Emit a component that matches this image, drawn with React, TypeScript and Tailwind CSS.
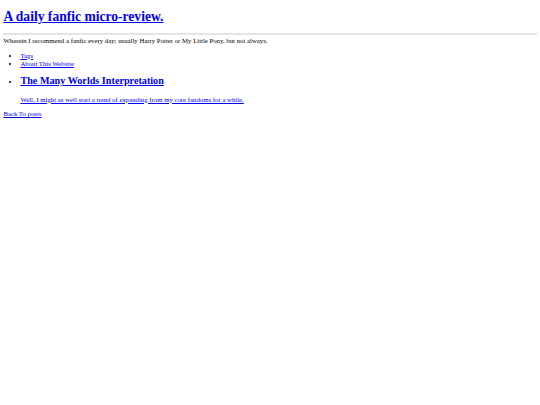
export default function App() {
  return (
    <div className="min-h-[405px] bg-white px-[3.4px] pt-px font-['Liberation_Serif',serif] text-[6.78px] leading-[7.8px] text-black">
      <h1 className="mt-[7.6px] text-[13.57px] leading-[15.6px] font-bold">
        <a href="#" className="text-[#0000ee] underline">
          A daily fanfic micro-review.
        </a>
      </h1>
      <hr className="mt-[8.6px] border-t-2 border-[#e4e4e4]" />
      <p className="mt-[1.8px]">
        Wherein I recommend a fanfic every day; usually Harry Potter or My Little Pony, but not always.
      </p>
      <ul className="mt-[7.4px] list-disc pl-[17px]">
        <li>
          <a href="#" className="text-[#0000ee] underline">Tags</a>
        </li>
        <li>
          <a href="#" className="text-[#0000ee] underline">About This Website</a>
        </li>
      </ul>
      <ul className="mt-[8.1px] list-disc pl-[17px]">
        <li>
          <h2 className="text-[10.18px] leading-[11.7px] font-bold">
            <a href="#" className="text-[#0000ee] underline">The Many Worlds Interpretation</a>
          </h2>
          <p className="mt-[8.4px]">
            <a href="#" className="text-[#0000ee] underline">
              Well, I might as well start a trend of expanding from my core fandoms for a while.
            </a>
          </p>
        </li>
      </ul>
      <div className="mt-[6.9px]">
        <a href="#" className="text-[#0000ee] underline">Back To posts</a>
      </div>
    </div>
  )
}
